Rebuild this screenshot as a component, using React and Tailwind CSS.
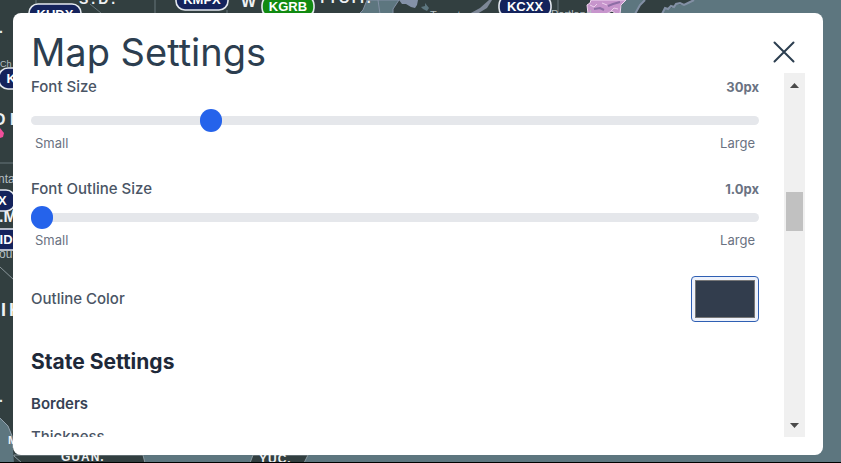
import { useState } from "react";

function Badge({ x, y, w = 52, code, fill = "#14235c" }) {
  return (
    <g>
      <rect x={x} y={y} width={w} height="21" rx="9" fill={fill} stroke="#e4e9ef" strokeWidth="1.6" />
      <text x={x + w / 2} y={y + 15} textAnchor="middle" fontSize="13" fontWeight="700" fill="#fff">
        {code}
      </text>
    </g>
  );
}

function MapBackground() {
  return (
    <svg
      className="absolute inset-0 h-full w-full font-['Liberation_Sans',sans-serif]"
      viewBox="0 0 841 463"
      preserveAspectRatio="xMinYMin slice"
      aria-hidden="true"
    >
      <rect width="841" height="463" fill="#5d767f" />
      {/* land */}
      <path
        d="M0 0H694L684 5L676 4L671 8L665 9L662 14H635L640 5L645 0H624L618 14H0Z"
        fill="#323f40"
      />
      <path d="M0 0H40V463H14L12 436L8 426L0 418Z" fill="#323f40" />
      <path d="M694 0L688 3L684 5L680 3L676 4L674 7L671 6L668 9L665 8L662 14" fill="none" stroke="#8390a5" strokeWidth="2" />
      <path d="M645 0L640 5L635 14" fill="none" stroke="#8390a5" strokeWidth="2" />
      <path d="M0 418L8 426L12 436L13 448" fill="none" stroke="#93a1ad" strokeWidth="1" />
      {/* lakes */}
      <path d="M367 0L363 10L359 14H393V9L399 0Z" fill="#5d767f" stroke="#8390a5" strokeWidth="1" />
      <path d="M378 0L380 14" stroke="#8390a5" strokeWidth="1" />
      <path d="M399 0H418L417 5L415 8L411 7L406 4L402 4Z" fill="#8491a8" />
      <path d="M425 3L429 8L427 11L423 9L421 7L425 6Z" fill="#5d767f" />
      <path d="M489 0L480 8L469 14H477L487 8L492 0Z" fill="#7d8797" />
      {/* radar return */}
      <path d="M591 0H626L621 5L620 14H616L612 11L606 14H597L588 14L587 5L590 3Z" fill="#c795cc" stroke="#f0d8f0" strokeWidth="1" />
      <path d="M590 5L594 7L597 4M602 3L607 5M611 11L614 8L618 9" fill="none" stroke="#ecd0ec" strokeWidth="1" />
      <path d="M594 9L600 8L604 10M608 6L613 4L620 2" fill="none" stroke="#8d6ea5" strokeWidth="2" />
      {/* state lines */}
      <path d="M36 0V12M155 0V14M227 10V14M558 0V14M0 163H14M90 4L101 13" fill="none" stroke="#67777b" strokeWidth="1" />
      <path d="M0 267L14 280" stroke="#8b979b" strokeWidth="1" />
      {/* southern coast */}
      <path d="M14 455H143L145 463H22L14 456Z" fill="#323f40" stroke="#8b9aa0" strokeWidth="1" />
      <path d="M253 455H308L304 463H250Z" fill="#323f40" stroke="#8b9aa0" strokeWidth="1" />
      <g fill="#eef1f3" fontSize="14" fontWeight="700">
        <text x="79" y="4" letterSpacing="3">S.D.</text>
        <text x="241" y="7" fontSize="16">W</text>
        <text x="318" y="3" letterSpacing="2">TTOIT.</text>
        <text x="-1" y="33">.</text>
        <text x="-7" y="125" fontSize="16">O I</text>
        <text x="-1" y="222" fontSize="16">.M</text>
        <text x="1" y="316" fontSize="18">I</text>
        <text x="9" y="316" fontSize="18">K</text>
        <text x="-1" y="402">.</text>
        <text x="8" y="444" fontSize="11">M</text>
        <text x="61" y="461" fontSize="12" letterSpacing="1">GUAN.</text>
        <text x="259" y="463" fontSize="12" letterSpacing="1">YUC.</text>
      </g>
      <g fill="#b5bfc3" fontSize="12">
        <text x="0" y="67" fontSize="9">Ch</text>
        <text x="-2" y="183">nta</text>
        <text x="-1" y="258">ou</text>
        <text x="430" y="19" fontSize="11">Toronto</text>
        <text x="551" y="18" fontSize="11">Portland</text>
      </g>
      <path d="M0 128L4 133L3 137L0 138Z" fill="#f04f9a" />
      <Badge x={29} y={4} code="KUDX" />
      <Badge x={176} y={-11} code="KMPX" />
      <Badge x={499} y={-4} code="KCXX" />
      <Badge x={262} y={-4} code="KGRB" fill="#118a11" />
      <Badge x={-1} y={68} code="KGLD" />
      <Badge x={-37} y={190} code="KFDX" />
      <Badge x={-30} y={229} code="KMID" />
      <rect y="462" width="841" height="1" fill="#000" />
    </svg>
  );
}

function SliderField({ id, label, unit, digits, min, max, initial, gap }) {
  const [value, setValue] = useState(initial);
  return (
    <div>
      <div className="flex items-center justify-between leading-[22px]">
        <label htmlFor={id} className="text-[15px] font-medium text-gray-600">
          {label}
        </label>
        <span className="text-[13px] font-bold text-gray-500">
          {value.toFixed(digits)}
          {unit}
        </span>
      </div>
      <input
        id={id}
        type="range"
        min={min}
        max={max}
        step="any"
        value={value}
        onChange={(e) => setValue(Number(e.target.value))}
        className={`${gap} block h-[22px] w-full cursor-pointer appearance-none bg-transparent [&::-webkit-slider-runnable-track]:h-[9px] [&::-webkit-slider-runnable-track]:rounded-full [&::-webkit-slider-runnable-track]:bg-gray-200 [&::-webkit-slider-thumb]:-mt-[7px] [&::-webkit-slider-thumb]:h-[23px] [&::-webkit-slider-thumb]:w-[22px] [&::-webkit-slider-thumb]:appearance-none [&::-webkit-slider-thumb]:rounded-full [&::-webkit-slider-thumb]:bg-[#2563eb]`}
      />
      <div className="mt-[3px] flex justify-between px-1 text-[13px] leading-[18px] text-gray-500">
        <span>Small</span>
        <span>Large</span>
      </div>
    </div>
  );
}

function Scrollbar() {
  return (
    <div className="flex w-[21px] shrink-0 flex-col items-center bg-[#f0f0f0]">
      <button type="button" aria-label="Scroll up" className="flex h-6 w-full items-center justify-center">
        <svg width="9" height="5" viewBox="0 0 9 5" aria-hidden="true">
          <path d="M0 5L4.5 0L9 5Z" fill="#4a4a4a" />
        </svg>
      </button>
      <div className="flex w-full flex-1 flex-col items-center">
        <div className="grow-[95]" />
        <div className="h-[39px] w-[17px] bg-[#c1c1c1]" />
        <div className="grow-[182]" />
      </div>
      <button type="button" aria-label="Scroll down" className="flex h-6 w-full items-center justify-center">
        <svg width="9" height="5" viewBox="0 0 9 5" aria-hidden="true">
          <path d="M0 0L4.5 5L9 0Z" fill="#4a4a4a" />
        </svg>
      </button>
    </div>
  );
}

export default function App() {
  const [outline, setOutline] = useState("#323d4d");

  return (
    <div className="relative h-screen overflow-hidden bg-[#5d767f] pt-[13px] pr-[18px] pb-2 pl-[13px] font-[Inter,sans-serif]">
      <MapBackground />
      <section
        aria-labelledby="settings-title"
        className="relative flex h-full flex-col rounded-lg bg-white p-[18px]"
      >
        <header className="flex h-[42px] shrink-0 items-center justify-between pr-2">
          <h1 id="settings-title" className="text-[38px] leading-[42px] font-normal text-[#2c3e50]">
            Map Settings
          </h1>
          <button type="button" aria-label="Close" className="flex size-[26px] items-center justify-center text-[#2c3e50]">
            <svg width="26" height="26" viewBox="0 0 26 26" fill="none" stroke="currentColor" strokeWidth="2" strokeLinecap="round" aria-hidden="true">
              <path d="M3.5 3.5L22.5 22.5M22.5 3.5L3.5 22.5" />
            </svg>
          </button>
        </header>

        <div className="flex min-h-0 flex-1">
          <div className="min-w-0 flex-1 overflow-hidden pt-[3px] pr-[25px]">
            <SliderField id="font-size" label="Font Size" unit="px" digits={0} min={10} max={94} initial={30.1} gap="mt-[11px]" />
            <div className="mt-[26px]">
              <SliderField id="outline-size" label="Font Outline Size" unit="px" digits={1} min={1} max={10} initial={1} gap="mt-[6px]" />
            </div>

            <div className="mt-[27px] flex items-center justify-between">
              <label htmlFor="outline-color" className="text-[15px] leading-[22px] font-medium text-gray-600">
                Outline Color
              </label>
              <input
                id="outline-color"
                type="color"
                value={outline}
                onChange={(e) => setOutline(e.target.value)}
                className="block h-[46px] w-[68px] cursor-pointer appearance-none rounded border border-[#2f5fb3] bg-[#eef2fb] p-[3px] [&::-webkit-color-swatch]:border [&::-webkit-color-swatch]:border-[#777] [&::-webkit-color-swatch-wrapper]:p-0"
              />
            </div>

            <h2 className="mt-[26px] text-[21px] leading-[28px] font-bold text-gray-800">State Settings</h2>
            <h3 className="mt-[17px] text-[15px] leading-[22px] font-semibold text-gray-700">Borders</h3>
            <p className="mt-[11px] text-[15px] leading-[22px] font-medium text-gray-600">Thickness</p>
          </div>
          <Scrollbar />
        </div>
      </section>
    </div>
  );
}
